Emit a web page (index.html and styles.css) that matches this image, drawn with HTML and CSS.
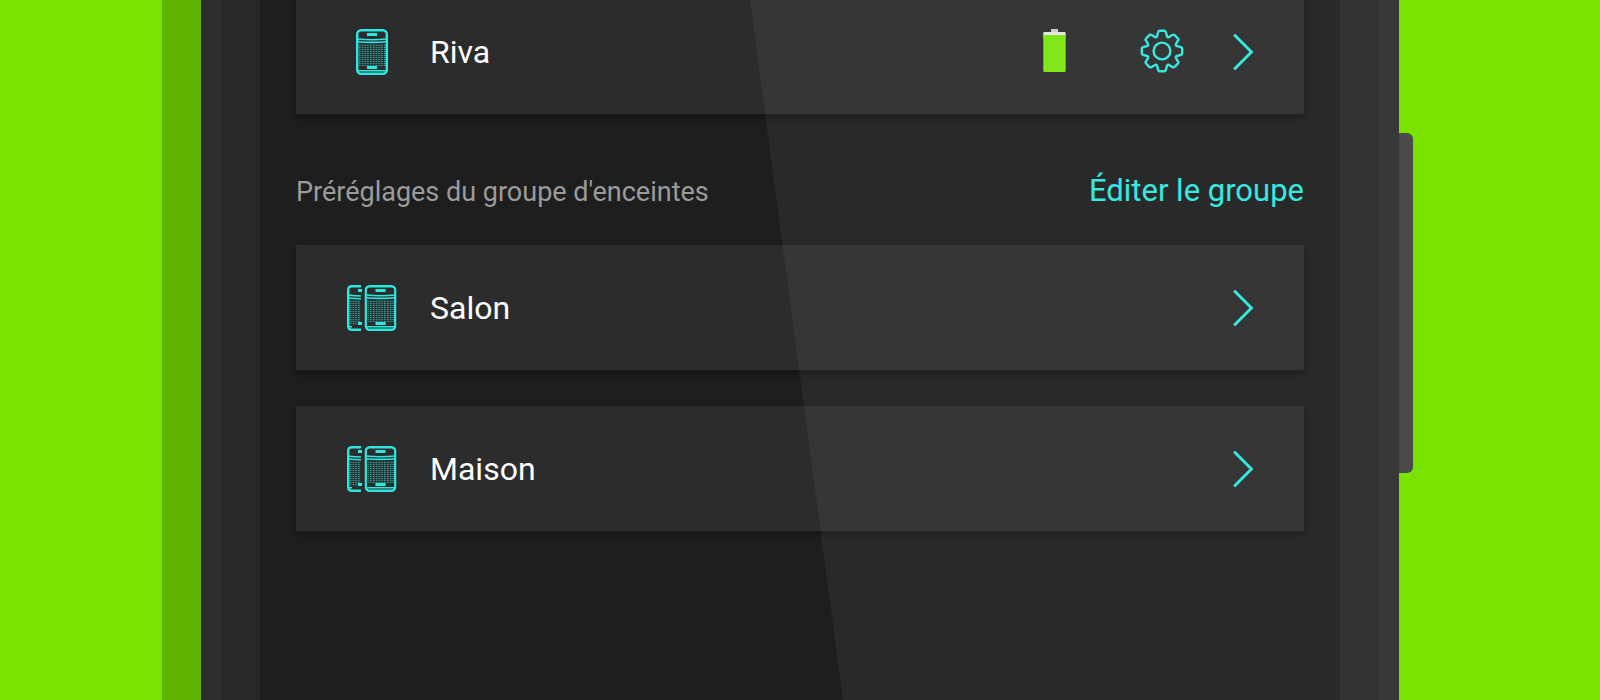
FILE: index.html
```html
<!DOCTYPE html>
<html lang="fr">
<head>
  <meta charset="UTF-8" />
  <meta name="viewport" content="width=device-width, initial-scale=1" />
  <title>Enceintes</title>
  <link rel="stylesheet" href="styles.css">
</head>
<body>

<!-- Shared icons -->
<svg class="sprite" aria-hidden="true">
  <defs>
    <pattern id="grille" width="2.800" height="2" patternUnits="userSpaceOnUse">
      <rect width="1.500" height="1.200" fill="#2ce8e0" opacity="0.650" />
    </pattern>
    <symbol id="icon-speaker" viewBox="0 0 32 46">
      <path d="M3 15H30V37H21.500V40H10.500V37H3Z" fill="url(#grille)" />
      <rect x="1.200" y="1.200" width="29.600" height="43.600" rx="4" fill="none" stroke="#2ce8e0" stroke-width="2.400" />
      <path d="M1 10Q16 11.500 31 10M1 12.800Q16 14 31 12.800M2 41.800H30" fill="none" stroke="#2ce8e0" stroke-width="1.600" />
      <path d="M11 5.500H21M11 38.500H21" stroke="#2ce8e0" stroke-width="3" />
    </symbol>
    <symbol id="icon-group" viewBox="0 0 50 46">
      <path d="M3 15H14V37H11V40H3Z" fill="url(#grille)" />
      <path d="M14 1.200H5Q1.200 1.200 1.200 5V41Q1.200 44.800 5 44.800H14" fill="none" stroke="#2ce8e0" stroke-width="2.400" />
      <path d="M1 10Q8 11 14 11M1 12.800Q8 13.800 14 13.800M2 41.800H5" fill="none" stroke="#2ce8e0" stroke-width="1.600" />
      <path d="M11 5.500H15M11 38.500H15" stroke="#2ce8e0" stroke-width="3" />
      <use href="#icon-speaker" x="17.500" width="32" height="46" />
    </symbol>
    <symbol id="icon-chevron" viewBox="0 0 20 36">
      <path d="M2 1.500L18.500 18L2 34.500" fill="none" stroke="#2ce8e0" stroke-width="3" stroke-linecap="round" />
    </symbol>
  </defs>
</svg>

<div class="phone">
  <main class="screen">
    <ul class="speaker-list">
      <li class="card">
        <svg class="icon-speaker" width="32" height="46" aria-hidden="true"><use href="#icon-speaker" /></svg>
        <span class="name">Riva</span>
        <svg class="battery" width="24" height="46" viewBox="0 0 24 46" role="img" aria-label="Batterie">
          <rect x="8" y="0" width="7" height="4" fill="#ccc" />
          <rect x="0.300" y="3" width="22.400" height="6" rx="1" fill="#e4e4e4" />
          <path d="M0.300 6H22.700V41.500Q22.700 43 21.500 43H1.500Q0.300 43 0.300 41.500Z" fill="#7ce60c" />
        </svg>
        <button type="button" class="btn-icon btn-settings" aria-label="Réglages">
          <svg width="44" height="46" viewBox="-22 -22 44 46" fill="none" stroke="#2ce8e0" stroke-width="2.400">
            <circle r="8.400" />
            <path d="M-5 -14.500L-4 -18.500Q-3.700 -20.200 -2.200 -20.200H2.200Q3.700 -20.200 4 -18.500L5 -14.500Q5.900 -13.400 6.700 -13.800L10.300 -15.900Q11.700 -16.900 12.700 -15.800L15.800 -12.700Q16.900 -11.700 15.900 -10.300L13.800 -6.700Q13.400 -5.900 14.500 -5L18.500 -4Q20.200 -3.700 20.200 -2.200V2.200Q20.200 3.700 18.500 4L14.500 5Q13.400 5.900 13.800 6.700L15.900 10.300Q16.900 11.700 15.800 12.700L12.700 15.800Q11.700 16.900 10.300 15.900L6.700 13.800Q5.900 13.400 5 14.500L4 18.500Q3.700 20.200 2.200 20.200H-2.200Q-3.700 20.200 -4 18.500L-5 14.500Q-5.900 13.400 -6.700 13.800L-10.300 15.900Q-11.700 16.900 -12.700 15.800L-15.800 12.700Q-16.900 11.700 -15.900 10.300L-13.800 6.700Q-13.400 5.900 -14.500 5L-18.500 4Q-20.200 3.700 -20.200 2.200V-2.200Q-20.200 -3.700 -18.500 -4L-14.500 -5Q-13.400 -5.900 -13.800 -6.700L-15.900 -10.300Q-16.900 -11.700 -15.800 -12.700L-12.700 -15.800Q-11.700 -16.900 -10.300 -15.900L-6.700 -13.800Q-5.900 -13.400 -5 -14.500Z" />
          </svg>
        </button>
        <button type="button" class="btn-icon" aria-label="Ouvrir Riva">
          <svg width="20" height="36"><use href="#icon-chevron" /></svg>
        </button>
      </li>
    </ul>

    <div class="section-header">
      <h2>Préréglages du groupe d'enceintes</h2>
      <a href="#groupes">Éditer le groupe</a>
    </div>

    <ul class="group-list" id="groupes">
      <li class="card">
        <svg class="icon-group" width="50" height="46" aria-hidden="true"><use href="#icon-group" /></svg>
        <span class="name">Salon</span>
        <button type="button" class="btn-icon" aria-label="Ouvrir Salon">
          <svg width="20" height="36"><use href="#icon-chevron" /></svg>
        </button>
      </li>
      <li class="card">
        <svg class="icon-group" width="50" height="46" aria-hidden="true"><use href="#icon-group" /></svg>
        <span class="name">Maison</span>
        <button type="button" class="btn-icon" aria-label="Ouvrir Maison">
          <svg width="20" height="36"><use href="#icon-chevron" /></svg>
        </button>
      </li>
    </ul>
  </main>
  <div class="glare"></div>
  <div class="side-key"></div>
</div>

</body>
</html>
```

FILE: styles.css
```css
* { margin: 0; padding: 0; box-sizing: border-box; }

body {
  font-family: Roboto, "Liberation Sans", sans-serif;
  background-color: #78e200;
  min-height: 100vh;
  display: flex;
  justify-content: center;
  padding: 0 40px;
  overflow: hidden;
}

.sprite {
  position: absolute;
  width: 0;
  height: 0;
}

/* Phone body */
.phone {
  position: relative;
  display: flex;
  width: 100%;
  max-width: 1198px;
  padding: 0 20px;
  background-color: #2e2e2e;
  box-shadow: -39px 0 0 #60b400;
}

.screen {
  flex: 1;
  padding: 0 36px;
  background-color: #1e1e1e;
  border: solid #282828;
  border-width: 0 39px;
}

/* Light reflection across the glass */
.glare {
  position: absolute;
  inset: 0;
  background-color: rgba(255, 255, 255, 0.05);
  clip-path: polygon(549px 0, 100% 0, 100% 100%, 642px 100%);
  pointer-events: none;
}

.side-key {
  position: absolute;
  top: 133px;
  left: 100%;
  width: 14px;
  height: 340px;
  background-color: #4a4a4a;
  border-radius: 0 6px 6px 0;
}

/* Cards */
ul { list-style: none; }

/* the first card is scrolled partly off the top */
.speaker-list { margin-top: -11px; }

.group-list {
  display: flex;
  flex-direction: column;
  gap: 36px;
}

.card {
  display: flex;
  align-items: center;
  height: 125px;
  padding: 0 51px;
  background-color: #2c2c2c;
  box-shadow: 0 4px 8px rgba(0, 0, 0, 0.3);
}

.icon-speaker { margin: 0 9px; }

.name {
  flex: 1;
  margin-left: 33px;
  font-size: 32px;
  color: #fff;
}

.btn-icon {
  display: flex;
  background: none;
  border: none;
  cursor: pointer;
}

.btn-settings { margin: 0 49px 0 73px; }

.section-header {
  display: flex;
  justify-content: space-between;
  align-items: baseline;
  height: 131px;
  padding-top: 58px;
}

.section-header h2 {
  font-size: 27px;
  font-weight: 400;
  color: #9b9b9b;
}

.section-header a {
  font-size: 31px;
  color: #2ce8e0;
  text-decoration: none;
}

.section-header a:hover { text-decoration: underline; }
```
